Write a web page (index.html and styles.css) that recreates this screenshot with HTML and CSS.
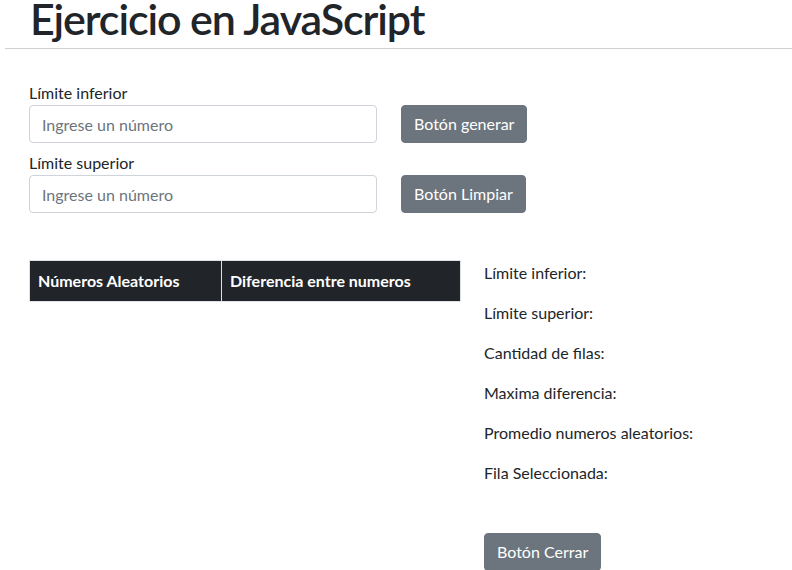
FILE: index.html
```html
<!DOCTYPE html>
<html lang="es">
<head>
<meta charset="utf-8">
<title>Ejercicio en JavaScript</title>
<link rel="stylesheet" href="styles.css">
</head>
<body>
<header class="page-header">
  <h1 class="title">Ejercicio en JavaScript</h1>
  <hr class="rule">
</header>
<main class="content">
  <form class="form-grid">
    <label class="field-label" for="inf">Límite inferior</label>
    <span></span>
    <input class="field-input" id="inf" type="text" placeholder="Ingrese un número">
    <div class="btn-cell"><button type="button" class="btn">Botón generar</button></div>
    <label class="field-label" for="sup">Límite superior</label>
    <span></span>
    <input class="field-input" id="sup" type="text" placeholder="Ingrese un número">
    <div class="btn-cell"><button type="button" class="btn">Botón Limpiar</button></div>
  </form>
  <section class="results">
    <table class="data-table">
      <colgroup><col class="col-a"><col class="col-b"></colgroup>
      <thead>
        <tr><th>Números Aleatorios</th><th>Diferencia entre numeros</th></tr>
      </thead>
      <tbody></tbody>
    </table>
    <div class="stats">
      <p class="stat">Límite inferior:</p>
      <p class="stat">Límite superior:</p>
      <p class="stat">Cantidad de filas:</p>
      <p class="stat">Maxima diferencia:</p>
      <p class="stat">Promedio numeros aleatorios:</p>
      <p class="stat">Fila Seleccionada:</p>
      <button type="button" class="btn btn-close">Botón Cerrar</button>
    </div>
  </section>
</main>
</body>
</html>
```
FILE: styles.css
```css
* { box-sizing: border-box; }
html, body { margin: 0; padding: 0; }
body {
  font-family: Lato, "Noto Sans", sans-serif;
  font-size: 16px;
  line-height: 24px;
  color: #212529;
  background: #fff;
  overflow: hidden;
  height: 570px;
}
.page-header { padding: 0; }
.title {
  margin: 0;
  padding-left: 30px;
  font-size: 43px;
  line-height: 38px;
  font-weight: 600;
  letter-spacing: -1.1px;
  color: #212529;
}
.rule {
  margin: 10px 0 0 5px;
  border: 0;
  border-top: 1px solid #cfcfcf;
  height: 0;
}
.content { padding: 0 0 0 29px; }
.form-grid {
  display: grid;
  grid-template-columns: 348px auto;
  column-gap: 24px;
  margin-top: 32px;
  justify-content: start;
}
.field-label { display: block; line-height: 24px; }
.field-input {
  height: 38px;
  width: 348px;
  padding: 6px 12px;
  font: inherit;
  color: #495057;
  border: 1px solid #ced4da;
  border-radius: 4px;
  margin-bottom: 8px;
}
.field-input::placeholder { color: #6c757d; }
.btn-cell { display: flex; align-items: flex-start; }
.btn {
  height: 38px;
  padding: 6px 12px;
  font: inherit;
  line-height: 24px;
  color: #fff;
  background: #6c757d;
  border: 1px solid #6c757d;
  border-radius: 4px;
}
.results {
  display: flex;
  align-items: flex-start;
  gap: 24px;
  margin-top: 39px;
}
.data-table {
  width: 431px;
  table-layout: fixed;
  border-collapse: collapse;
  border: 1px solid #dee2e6;
}
.col-a { width: 192px; }
.col-b { width: 239px; }
.data-table th {
  background: #212529;
  color: #fff;
  font-weight: 700;
  text-align: left;
  padding: 8px;
  height: 41px;
  line-height: 24px;
  border: 1px solid #dee2e6;
  white-space: nowrap;
}
.stats { padding-top: 1px; margin-left: -1px; }
.stat { margin: 0 0 16px 0; line-height: 24px; }
.btn-close { margin-top: 32px; }
```
